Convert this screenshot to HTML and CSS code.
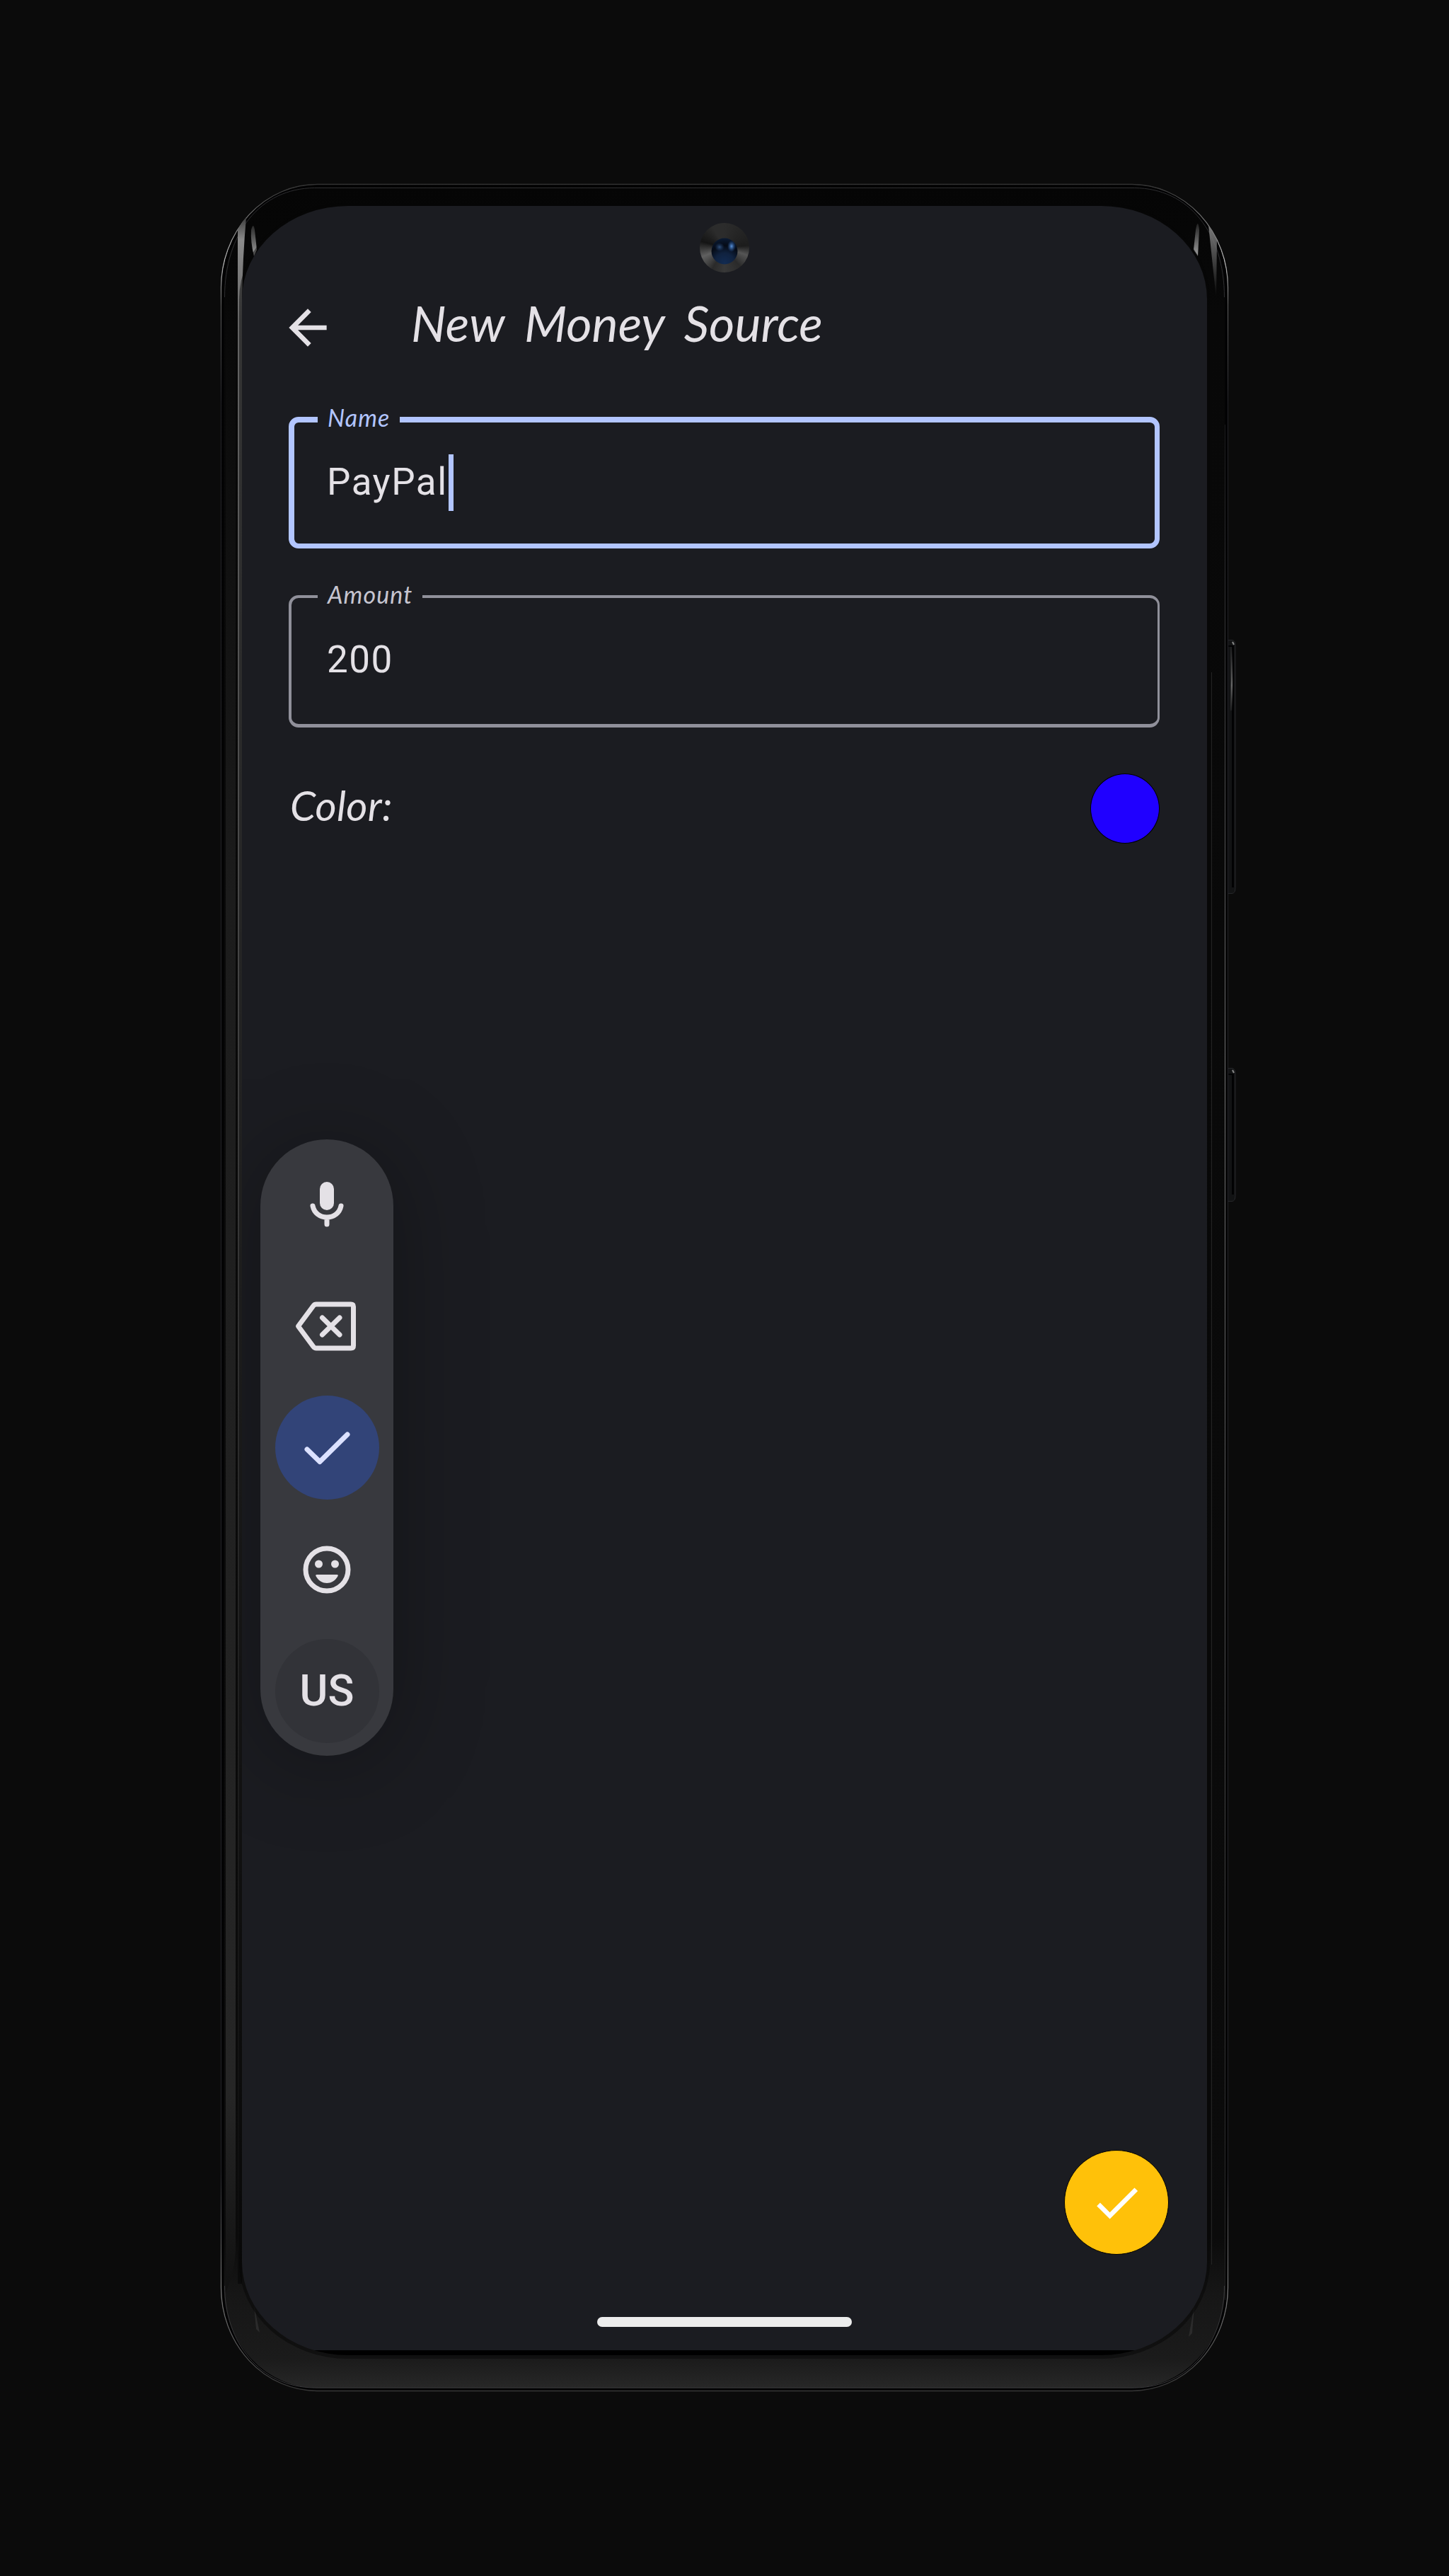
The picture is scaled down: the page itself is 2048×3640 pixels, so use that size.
FILE: index.html
```html
<!DOCTYPE html>
<html lang="en">
<head>
<meta charset="utf-8">
<title>New Money Source</title>
<link rel="stylesheet" href="styles.css">
</head>
<body>
<div class="phone">
  <svg class="frame" viewBox="300 240 1460 3160" aria-hidden="true">
    <defs>
      <linearGradient id="body" x1="0" y1="260" x2="0" y2="3380" gradientUnits="userSpaceOnUse">
        <stop offset="0" stop-color="#050505"/><stop offset=".06" stop-color="#080808"/><stop offset=".93" stop-color="#0b0b0b"/><stop offset=".955" stop-color="#161616"/><stop offset=".985" stop-color="#1b1b1b"/><stop offset="1" stop-color="#292929"/>
      </linearGradient>
      <linearGradient id="edge" x1="0" y1="260" x2="0" y2="3380" gradientUnits="userSpaceOnUse">
        <stop offset="0" stop-color="#333"/><stop offset=".035" stop-color="#bbb"/><stop offset=".055" stop-color="#555"/><stop offset=".1" stop-color="#1d1d22"/><stop offset=".9" stop-color="#1d1d22"/><stop offset=".955" stop-color="#777"/><stop offset="1" stop-color="#333"/>
      </linearGradient>
      <linearGradient id="glow" x1="0" y1="310" x2="0" y2="3200" gradientUnits="userSpaceOnUse">
        <stop offset="0" stop-color="#444"/><stop offset=".01" stop-color="#8a8a8a"/><stop offset=".05" stop-color="#646464"/><stop offset=".3" stop-color="#4a4a4a"/><stop offset=".7" stop-color="#222"/><stop offset="1" stop-color="#0b0b0b"/>
      </linearGradient>
      <linearGradient id="side" x1="0" y1="420" x2="0" y2="3240" gradientUnits="userSpaceOnUse">
        <stop offset="0" stop-color="#080808"/><stop offset=".3" stop-color="#1c1c1c"/><stop offset=".9" stop-color="#262626"/><stop offset="1" stop-color="#111"/>
      </linearGradient>
      <linearGradient id="line" x1="0" y1="600" x2="0" y2="3250" gradientUnits="userSpaceOnUse">
        <stop offset="0" stop-color="#1a1a1c"/><stop offset=".35" stop-color="#777"/><stop offset=".6" stop-color="#555"/><stop offset="1" stop-color="#222"/>
      </linearGradient>
      <linearGradient id="fade" x1="0" y1="320" x2="0" y2="420" gradientUnits="userSpaceOnUse">
        <stop offset="0" stop-color="#777"/><stop offset="1" stop-color="#777" stop-opacity="0"/>
      </linearGradient>
      <linearGradient id="glint" x1="0" y1="305" x2="0" y2="365" gradientUnits="userSpaceOnUse">
        <stop offset="0" stop-color="#999" stop-opacity="0"/><stop offset="1" stop-color="#aaa"/>
      </linearGradient>
      <linearGradient id="key" x1="0" y1="904" x2="0" y2="1263" gradientUnits="userSpaceOnUse">
        <stop offset="0" stop-color="#555" stop-opacity="0"/><stop offset=".18" stop-color="#666"/><stop offset=".3" stop-color="#555" stop-opacity="0"/>
      </linearGradient>
    </defs>
    <g fill="#121314" stroke="#26272a" stroke-width="1">
      <path d="M1735 904.500h6q5 0 5 8v342q0 8-5 8h-6z"/>
      <path d="M1735 1509.500h6q5 0 5 8v172q0 8-5 8h-6z"/>
    </g>
    <g fill="#020203"><path d="M1741 914h3v340h-3zM1741 1518h3v170h-3zM1736 912h8v2h-8zM1736 1517h8v2h-8z"/></g>
    <path d="M1740 914q2 50 0 90" stroke="url(#key)" stroke-width="2.500" fill="none"/>
    <path d="M1742 907l2 4M1742 1512l2 4" stroke="#888" stroke-width="2"/>
    <rect x="312.500" y="260.500" width="1423" height="3118" rx="136" ry="146" fill="url(#body)" stroke="url(#edge)" stroke-width="1.300"/>
    <rect x="315" y="263" width="1418" height="3113" rx="133" ry="143" fill="none" stroke="#020203" stroke-width="3"/>
    <path d="M317.500 420c0-90 50-154 127-154.500h1159c77 .5 127 64 127 154.500" fill="none" stroke="#2e2e30" stroke-width="1"/>
    <path d="M317.500 3230c0 80 50 143.500 127 144h1159c77-.5 127-64 127-144" fill="none" stroke="#38383a" stroke-width="1"/>
    <path d="M319 440h14v2740q-1 30-14 60z" fill="url(#side)"/>
    <path d="M336 325q6-12 12-18q-5 55-6 120v2800h-6z" fill="url(#glow)"/>
    <path d="M355 325q3-12 5 0l3 28-4 9q-5-20-4-37z" fill="url(#glint)"/>
    <path d="M1690 325q3-18 5 0l-2 37-6-9z" fill="url(#glint)"/>
    <path d="M1708 318l12 20-1 84z" fill="url(#fade)"/>
    <path d="M1712.500 950V3200" stroke="#242424"/>
    <path d="M1731.500 600V3250" stroke="url(#line)"/>
    <path d="M359 3258l8 38-5-5z" fill="#2b2b2b"/><path d="M1688 3258l-8 44 5-5z" fill="#2b2b2b"/>
    <rect x="338" y="287" width="1372" height="3046" rx="154" ry="136" fill="#050505" opacity=".5"/>
  </svg>
  <main class="screen">
    <header class="bar">
      <svg class="back" viewBox="0 0 24 24"><path d="M20 11H7.830l5.590-5.590L12 4l-8 8 8 8 1.410-1.410L7.830 13H20z"/></svg>
      <h1 class="title">New Money Source</h1>
    </header>
    <div class="field focused"><span class="label">Name</span><span class="value">PayPal</span><i class="caret"></i></div>
    <div class="field"><span class="label">Amount</span><span class="value">200</span></div>
    <div class="color-row"><span class="color-name">Color:</span><span class="swatch"></span></div>
    <button class="fab" aria-label="Save"><svg viewBox="0 0 24 24"><path d="M9 16.170 4.830 12l-1.420 1.410L9 19 21 7l-1.410-1.410z"/></svg></button>
    <div class="home"></div>
    <svg class="camera" viewBox="-36 -36 72 72" aria-hidden="true">
      <defs>
        <radialGradient id="lens" cx=".5" cy=".95" r=".95"><stop offset="0" stop-color="#122b52"/><stop offset=".4" stop-color="#10223f"/><stop offset=".7" stop-color="#050b16"/><stop offset="1" stop-color="#0a1a33"/></radialGradient>
        <radialGradient id="spot"><stop offset="0" stop-color="#5b94dc"/><stop offset="1" stop-color="#2a5da8" stop-opacity="0"/></radialGradient>
      </defs>
      <foreignObject x="-35" y="-35" width="70" height="70"><div class="ring"></div></foreignObject>
      <circle cy="5" r="18.500" fill="url(#lens)"/>
      <ellipse cx="10" cy="-2" rx="6" ry="8" fill="url(#spot)"/>
      <ellipse cx="-7" cy="-1" rx="7" ry="6" fill="url(#spot)" opacity=".5"/>
    </svg>
    <nav class="keys">
      <span class="key"><svg viewBox="-40 -40 80 80"><rect x="-10" y="-32" width="20" height="40" rx="10" fill="#e4e1e6"/><path d="M-20 2C-18 12-10 18 0 18S18 12 20 2M0 18V28" class="stroke"/></svg></span>
      <span class="key"><svg viewBox="-48 -40 96 80"><path d="M-40.500 0-19-29Q-17.500-31-15-31H34Q37.500-31 37.500-27.500V27.500Q37.500 31 34 31H-15Q-17.500 31-19 29Z" class="stroke"/><path d="M-6.500-12 18 12M18-12-6.500 12" class="stroke"/></svg></span>
      <span class="key enter"><svg viewBox="-40 -40 80 80"><path d="M-28 2-10 19.500 29-19" class="stroke"/></svg></span>
      <span class="key"><svg viewBox="-40 -40 80 80"><circle r="30" class="stroke"/><circle cx="-11.500" cy="-8" r="5.500" fill="#e4e1e6"/><circle cx="11.500" cy="-8" r="5.500" fill="#e4e1e6"/><path d="M-14 7H14Q17 7 15 10C8 22-8 22-15 10Q-17 7-14 7Z" fill="#e4e1e6"/></svg></span>
      <span class="key lang">US</span>
    </nav>
  </main>
</div>
</body>
</html>
```
FILE: styles.css
```css
* { box-sizing: border-box; }
body { margin: 0; background: #0b0b0b; color: #e4e1e6; }
.phone { position: relative; width: 2048px; height: 3640px; padding: 291px 342px 312px; display: flex; }
.frame { position: absolute; left: 300px; top: 240px; width: 1460px; height: 3160px; }
.screen {
  position: relative; flex: 1; display: flex; flex-direction: column;
  padding: 132px 67px 40px 66px; overflow: hidden;
  border-radius: 150px / 132px;
  background: linear-gradient(#1b1c21 0 3030px, #000 3030px);
}
.bar { display: flex; align-items: center; height: 80px; margin-left: -13px; gap: 106px; }
.back { width: 80px; height: 80px; fill: #e4e1e6; }
.title, .label, .color-name { font-family: Lato, sans-serif; font-style: italic; font-weight: 400; white-space: nowrap; }
.title { margin: 0 0 14px; font-size: 70px; line-height: 80px; word-spacing: 12px; }
.field { position: relative; display: flex; align-items: flex-start; height: 187px; margin-top: 66px; padding: 0 50px; border: solid #90909a; border-width: 4px 3px 5px 4px; border-radius: 14px; }
.field.focused { height: 186px; margin-top: 86px; padding: 0 46px; border-color: #b2c5ff; border-width: 8px 7px 7px 8px; }
.label { position: absolute; left: 37px; top: -28px; padding: 0 14px; background: #1b1c21; color: #c6c5d0; font-size: 34px; line-height: 46px; letter-spacing: 1.1px; }
.focused .label { left: 33px; top: -30px; color: #b2c5ff; }
.value { margin-top: 55px; font: 53px/64px Roboto, sans-serif; letter-spacing: 1.5px; }
.focused .value { margin-top: 52px; }
.caret { width: 7px; height: 80px; margin: 45px 0 0 1px; background: #b2c5ff; }
.color-row { display: flex; justify-content: space-between; margin-top: 65px; }
.color-name { font-size: 58px; line-height: 90px; margin-left: 2px; letter-spacing: .3px; }
.swatch { width: 98px; height: 99px; border-radius: 50%; background: #2000ff; border: 1px solid #000; }
.fab { display: grid; place-items: center; align-self: flex-end; width: 148px; height: 148px; margin: auto -13px 88px 0; padding: 0; border: 1px solid #000; border-radius: 50%; background: #ffc109; }
.fab svg { width: 79px; height: 79px; fill: #fff; }
.home { align-self: center; width: 360px; height: 14px; border-radius: 7px; background: #ececec; }
.camera { position: absolute; left: 646px; top: 23px; width: 72px; height: 72px; }
.ring { width: 70px; height: 70px; border-radius: 50%; background: conic-gradient(#2c2c2c, #222 60deg, #1c1c1c 85deg, #555 108deg, #2a2a2a 140deg, #383838 180deg, #2a2a2a 210deg, #606060 248deg, #444 262deg, #141414 285deg, #2c2c2c 330deg); }
.keys { position: absolute; left: 26px; top: 1319px; width: 188px; height: 871px; padding-top: 5px; display: flex; flex-direction: column; align-items: center; gap: 25px; border-radius: 94px; background: #38393e; box-shadow: 0 12px 130px rgba(0,0,0,.3); }
.key { display: grid; place-items: center; width: 147px; height: 147px; border-radius: 50%; }
.key:first-child { margin-top: 13px; }
.key svg { height: 80px; overflow: visible; }
.stroke { fill: none; stroke: #e4e1e6; stroke-width: 7; stroke-linecap: round; stroke-linejoin: round; }
.enter { background: #324478; }
.enter .stroke { stroke: #dbe1ff; }
.lang { background: #323338; font: 500 61px/147px Roboto, sans-serif; }
```
